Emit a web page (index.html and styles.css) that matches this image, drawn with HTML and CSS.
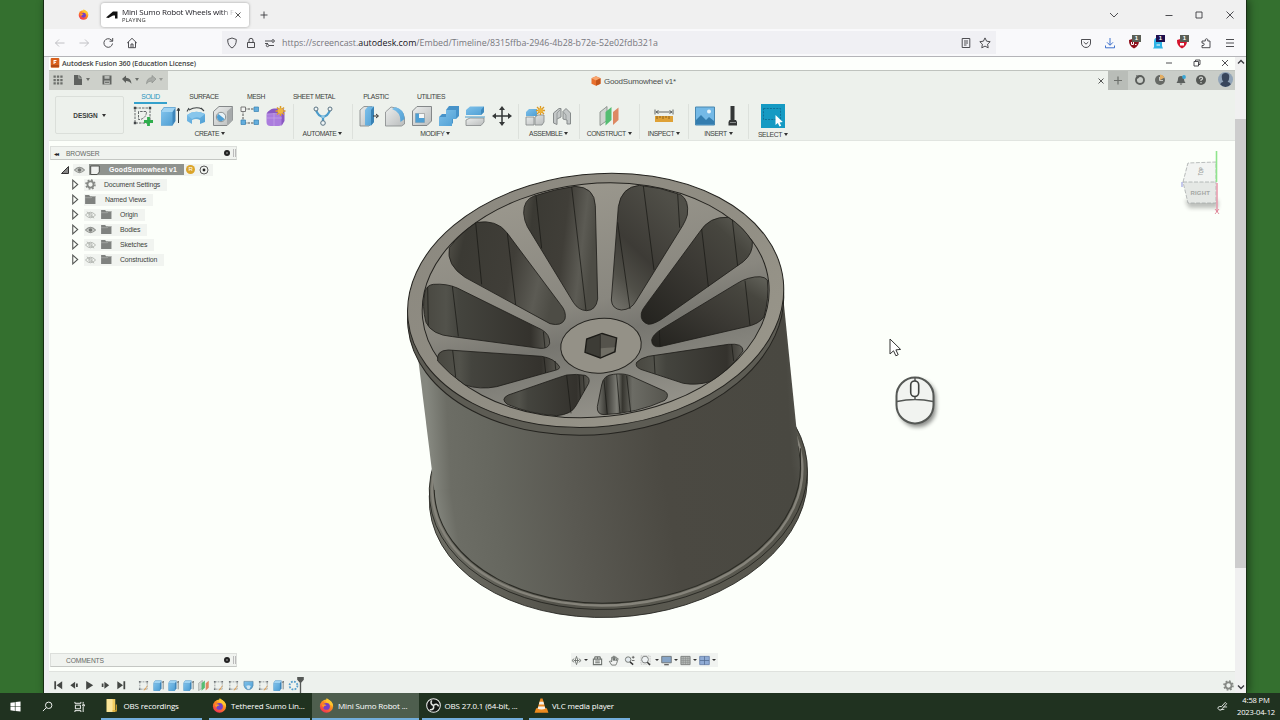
FILE: index.html
```html
<!DOCTYPE html>
<html lang="en">

<head>
  <meta charset="UTF-8" />
  <meta name="viewport" content="width=device-width, initial-scale=1.0" />
  <title>Mini Sumo Robot Wheels</title>
  <link rel="stylesheet" href="styles.css">
</head>

<body>
  <!-- Shared icons -->
  <svg class="sprite">
    <defs>
      <linearGradient id="flame" x1="0.8" y1="0" x2="0.2" y2="1">
        <stop offset="0" stop-color="#ffd93b" />
        <stop offset="0.45" stop-color="#ff8a1f" />
        <stop offset="1" stop-color="#f0245b" />
      </linearGradient>
      <linearGradient id="blueFace" x1="0" y1="0" x2="1" y2="1">
        <stop offset="0" stop-color="#7fc1ea" />
        <stop offset="1" stop-color="#4f9fd4" />
      </linearGradient>
      <linearGradient id="greyFace" x1="0" y1="0" x2="1" y2="1">
        <stop offset="0" stop-color="#eceeed" />
        <stop offset="1" stop-color="#b9bcbc" />
      </linearGradient>
    </defs>
    <symbol id="firefox" viewBox="0 0 16 16">
      <circle cx="8" cy="8.700" r="7" fill="url(#flame)" />
      <path d="M8 .2C11 1.500 14.500 4.500 15 8.500L11 7 7.500 4z" fill="#ffc72e" />
      <path d="M1.500 3l1.800 1.500L5 3.500l.5 3z" fill="#ff7b27" />
      <circle cx="8" cy="9" r="3.600" fill="#7440c8" />
      <path d="M3 7.500q3-2 5 .5-3 0-3 2.500z" fill="#ff9a24" />
    </symbol>
    <symbol id="folder" viewBox="0 0 12 10">
      <path d="M0 0h4.500l1 1.500H11.500V10H0z" fill="#7f827f" />
      <path d="M0 3h7l1-1.300h4" stroke="#b5b8b4" stroke-width=".7" fill="none" />
    </symbol>
    <symbol id="eye" viewBox="0 0 12 8">
      <path d="M.5 4Q6-2 11.500 4 6 10 .5 4z" fill="#c6c9c5" stroke="#8a8d89" stroke-width="1.100" />
      <circle cx="6" cy="4" r="2" fill="#757874" />
    </symbol>
    <symbol id="eye-off" viewBox="0 0 12 8">
      <path d="M.5 4Q6-2 11.500 4 6 10 .5 4zM2 .5l8 7" fill="none" stroke="#a9aca8" stroke-width=".9" />
      <circle cx="6" cy="4" r="1.800" fill="none" stroke="#a9aca8" stroke-width=".9" />
    </symbol>
    <symbol id="gear" viewBox="0 0 12 12">
      <circle cx="6" cy="6" r="3.300" fill="none" stroke="#858884" stroke-width="1.900" />
      <circle cx="6" cy="6" r="4.900" fill="none" stroke="#858884" stroke-width="1.700" stroke-dasharray="1.900 1.950" />
    </symbol>
    <symbol id="sketch" viewBox="0 0 12 12">
      <path d="M2 2h8v8H2z" fill="none" stroke="#7e8488" stroke-width=".8" stroke-dasharray="2 1" />
      <path d="M1 1h1.700v1.700H1zM9.300 1H11v1.700H9.300zM1 9.300h1.700V11H1z" fill="#6d7275" />
      <path d="M11 5l-4 5-1 1.500L8 11z" fill="#e39a45" />
    </symbol>
    <symbol id="extrude" viewBox="0 0 20 20">
      <path d="M1 5l3-4h11.500v14l-3 4.500H1z" fill="#3e86bb" />
      <path d="M1 6h11.500v13.500H1z" fill="url(#blueFace)" />
      <path d="M1 6l3-4.500h11.500l-3 4.500z" fill="#9fd3f2" />
      <path d="M18.500 17V3m-1.500 2l1.500-3L20 5" fill="none" stroke="#34383a" />
    </symbol>
    <symbol id="plane" viewBox="0 0 20 20">
      <path d="M1 6l7-5.500v14L1 19.500z" fill="#d0d4d1" stroke="#7f8582" stroke-width=".8" />
      <path d="M6.500 6l6-5v13l-6 5.500z" fill="#55bd72" />
      <path d="M14 6l5.500-4.500v12.500L14 19z" fill="#dd8862" />
    </symbol>
    <symbol id="tri" viewBox="0 0 8 10">
      <path d="M1.500 1L6 5l-4.500 4z" fill="#fcfffa" stroke="#555855" />
    </symbol>
  </svg>

  <div class="desktop">
    <div class="window">
      <!-- Firefox tab strip -->
      <div class="tab-strip">
        <svg class="pinned"><use href="#firefox" /></svg>
        <div class="tab">
          <svg class="favicon" viewBox="0 0 12 10"><path d="M0 7.500L7 1.500h4.500V8.500H9V5.500H7L2.500 8z" fill="#111" /></svg>
          <div class="tab-label">
            <div class="tab-title">Mini Sumo Robot Wheels with F</div>
            <div class="tab-state">PLAYING</div>
          </div>
          <svg class="x-icon" viewBox="0 0 8 8"><path d="M1.500 1.500l5 5m0-5l-5 5" /></svg>
        </div>
        <svg class="line new-tab" viewBox="0 0 8 8"><path d="M4 .5v7M.5 4h7" /></svg>
        <div class="window-controls">
          <svg class="line" viewBox="0 0 8 8"><path d="M0 2l4 4 4-4" /></svg>
          <svg class="line" viewBox="0 0 8 8"><path d="M.5 4.500h7" /></svg>
          <svg class="line" viewBox="0 0 8 8"><path d="M1 1h6v6H1z" /></svg>
          <svg class="line" viewBox="0 0 8 8"><path d="M.5.5l7 7m0-7l-7 7" /></svg>
        </div>
      </div>

      <!-- Address bar -->
      <div class="nav-bar">
        <div class="nav-buttons">
          <svg class="line faded" viewBox="0 0 12 12"><path d="M10.500 6h-9m3.500-3.500L1.500 6 5 9.500" /></svg>
          <svg class="line faded" viewBox="0 0 12 12"><path d="M1.500 6h9M7 2.500L10.500 6 7 9.500" /></svg>
          <svg class="line" viewBox="0 0 12 12"><path d="M10.500 6.500a4.300 4.300 0 1 1-1.300-3.600L10.500 4M10.700 1v3.200H7.500" /></svg>
          <svg class="line" viewBox="0 0 12 12"><path d="M1.200 6L6 1.300 10.800 6M2.500 5v5.700h7V5M5 10.500V7h2v3.500" /></svg>
        </div>
        <div class="url-field">
          <svg class="line" viewBox="0 0 12 12"><path d="M6 1l4.300 1.500Q10.500 8.500 6 11 1.500 8.500 1.700 2.500z" /></svg>
          <svg class="line" viewBox="0 0 12 12"><path d="M2.500 5.500h7v5h-7zM4 5.500V3.300a2 2 0 0 1 4 0v2.200" /></svg>
          <svg class="line" viewBox="0 0 12 12"><path d="M1 4h6M1 6.500h3M5 8.500h5" /><circle cx="9" cy="4" r="1.300" /><circle cx="3.500" cy="8.500" r="1.200" /></svg>
          <span class="url">https://screencast.<b>autodesk.com</b>/Embed/Timeline/8315ffba-2946-4b28-b72e-52e02fdb321a</span>
          <svg class="line" viewBox="0 0 12 12"><path d="M2.200 1.500h7.600v9H2.200zM4 4h4M4 6h4M4 8h2.500" /></svg>
          <svg class="line" viewBox="0 0 12 12"><path d="M6 .9l1.600 3.300 3.600.5-2.600 2.500.6 3.600L6 9.100l-3.200 1.700.6-3.600L.8 4.700l3.600-.5z" /></svg>
        </div>
        <div class="extensions">
          <svg class="line" viewBox="0 0 12 12"><path d="M1.500 2.500h9V6a4.500 4.500 0 0 1-9 0zM3.700 5L6 7.200 8.300 5" /></svg>
          <svg class="line download" viewBox="0 0 12 12"><path d="M6 1v7M3 5.300L6 8.300l3-3M1.500 8.500v2.300h9V8.500" /></svg>
          <div class="ext">
            <svg viewBox="0 0 12 12"><path d="M6 1.500l5 1.500q.3 6-5 8.500Q.7 9 1 3z" fill="#8e0f1b" /><path d="M3.500 5v2.500h2V5m1.500 2.500h1.500" stroke="#fff" fill="none" /></svg>
            <span class="badge">1</span>
          </div>
          <div class="ext">
            <svg viewBox="0 0 12 12"><path d="M2 10V4.500a4 4 0 0 1 8 0V9l1 2.500H1z" fill="#2eb3e6" /><path d="M4.500 8h3.500" stroke="#fff" /></svg>
            <span class="badge purple">1</span>
          </div>
          <div class="ext">
            <svg viewBox="0 0 12 12"><path d="M6 1.500l5 1.500q.3 6-5 8.500Q.7 9 1 3z" fill="#d4142c" /><path d="M4 6h4v2.500H4z" fill="#fff" /></svg>
            <span class="badge">1</span>
          </div>
          <svg class="line" viewBox="0 0 12 12"><path d="M2 4h3.300V2.700a1.300 1.300 0 0 1 2.500 0V4H10v6.700H2V8.500h1a1.200 1.200 0 0 0 0-2.400H2z" /></svg>
          <svg class="line" viewBox="0 0 12 12"><path d="M2 2.500h8M2 6h8M2 9.500h8" /></svg>
        </div>
      </div>

      <div class="page">
        <div class="fusion">
          <!-- Fusion title bar -->
          <div class="title-bar">
            <svg class="app-icon" viewBox="0 0 10 10"><rect x=".7" y="0" width="8.600" height="9.700" rx="1" fill="#d9601c" /><path d="M4 2.500h2.500M4 4.300h2M4 2v4" stroke="#fff" /><path d="M1 8h8" stroke="#8a3512" /></svg>
            <span>Autodesk Fusion 360 (Education License)</span>
            <div class="app-controls">
              <svg class="line" viewBox="0 0 8 8"><path d="M1 4h6" /></svg>
              <svg class="line" viewBox="0 0 8 8"><path d="M1 2.500h4.500V7H1zM2.500 2.500V1H7v4.500H5.500" /></svg>
              <svg class="line" viewBox="0 0 8 8"><path d="M1 1l6 6m0-6L1 7" /></svg>
            </div>
          </div>

          <div class="quick-bar">
            <div class="quick-tools">
              <svg viewBox="0 0 12 12"><path d="M1.500 1.500h2.300v2.300H1.500zM4.900 1.500h2.300v2.300H4.900zM8.300 1.500h2.300v2.300H8.300zM1.500 4.900h2.300v2.300H1.500zM4.900 4.900h2.300v2.300H4.900zM8.300 4.900h2.300v2.300H8.300zM1.500 8.300h2.300v2.300H1.500zM4.900 8.300h2.300v2.300H4.900zM8.300 8.300h2.300v2.300H8.300z" fill="#6c6f6b" /></svg>
              <svg class="doc" viewBox="0 0 12 12"><path d="M2 1h4.500v3.500H10V11H2zM7.300 1L10 3.700H7.300z" fill="#5f625f" /></svg>
              <i class="caret grey"></i>
              <svg class="save" viewBox="0 0 12 12"><path d="M1.500 1.500h9v9h-9z" fill="#616461" /><path d="M3.500 2h5v2.700h-5zM3.200 6.500h5.600v3.800H3.200z" fill="#b7bab6" /><path d="M4 8.300h4" stroke="#616461" /></svg>
              <svg class="undo" viewBox="0 0 12 12"><path d="M1 5l4-3.500v2.200q5 0 5.500 6-2-3-5.500-2.700v2z" fill="#5c5f5c" /></svg>
              <i class="caret grey"></i>
              <svg class="redo" viewBox="0 0 12 12"><path d="M11 5L7 1.500v2.200q-5 0-5.500 6 2-3 5.500-2.700v2z" fill="#a9aca8" stroke="#8d908c" stroke-width=".7" /></svg>
              <i class="caret light"></i>
            </div>
            <div class="doc-tab">
              <div class="doc-name">
                <svg viewBox="0 0 10 10"><path d="M5 .3l4.500 2v5.400L5 9.800.5 7.700V2.300z" fill="#e8702d" /><path d="M5 .3l4.500 2L5 4.500.5 2.300z" fill="#f7a66f" /><path d="M5 4.500l4.500-2.200v5.400L5 9.800z" fill="#c2541a" /></svg>
                <span>GoodSumowheel v1*</span>
              </div>
              <svg class="x-icon" viewBox="0 0 8 8"><path d="M1.500 1.500l5 5m0-5l-5 5" /></svg>
            </div>
            <div class="status-tools">
              <svg class="plus" viewBox="0 0 20 19"><path d="M10 5.500v8M6 9.500h8" stroke="#6d706c" stroke-width="1.200" /></svg>
              <svg viewBox="0 0 12 12"><circle cx="6" cy="6" r="4" fill="none" stroke="#5a5d5a" stroke-width="1.900" /><path d="M2 1l4 1.500L3.500 5z" fill="#5a5d5a" /></svg>
              <svg viewBox="0 0 12 12"><circle cx="6" cy="6" r="5" fill="#666965" /><path d="M6 6V.5a5.500 5.500 0 0 1 4.500 3z" fill="#e4ae61" /><path d="M5.500 3v3.500H9" stroke="#c7cac6" fill="none" /></svg>
              <svg viewBox="0 0 12 12"><path d="M1.500 9q1.500-1.500 1.500-4a3 3 0 0 1 6 0q0 2.500 1.500 4zM4.500 9.500h3L6 11z" fill="#5b5f5d" /><circle cx="9" cy="3" r="1.900" fill="#38a5d5" /></svg>
              <svg viewBox="0 0 12 12"><circle cx="6" cy="6" r="5" fill="#555855" /><path d="M4.400 4.700q.1-1.500 1.600-1.500t1.600 1.300Q7.600 5.500 6 6v1M6 8v1.300" stroke="#d3d6d2" fill="none" stroke-width="1.200" /></svg>
              <svg class="avatar" viewBox="0 0 14 14"><circle cx="7" cy="7" r="7" fill="#91a4b8" /><path d="M3.500 4.500Q3.500 1 7 1t3.500 3.500Q10.500 8 9 9q2.500.5 3 2.500Q10 14 7 14t-5-2.500Q2.500 9.500 5 9 3.500 8 3.500 4.500z" fill="#38465c" /></svg>
            </div>
          </div>

          <!-- Ribbon -->
          <div class="ribbon">
            <div class="workspace">DESIGN <i class="caret"></i></div>
            <div class="ribbon-main">
              <div class="ribbon-tabs">
                <span class="active">SOLID</span>
                <span class="t-surface">SURFACE</span>
                <span class="t-mesh">MESH</span>
                <span class="t-sheet">SHEET METAL</span>
                <span class="t-plastic">PLASTIC</span>
                <span class="t-utilities">UTILITIES</span>
              </div>
              <div class="groups">
                <div class="group g-create">
                  <div class="icons">
                    <svg viewBox="0 0 20 20"><path d="M2 2h15v15H2zM5.500 5.500v8h2q6-2 6-8z" fill="none" stroke="#55595b" stroke-width=".9" stroke-dasharray="2.500 1" /><path d="M.8.8h2.400v2.400H.8zM15.800.8h2.400v2.400h-2.400zM.8 15.800h2.400v2.400H.8z" fill="#44484a" /><path d="M15.500 11v9M11 15.500h9" stroke="#2fae4d" stroke-width="2.800" /></svg>
                    <svg><use href="#extrude" /></svg>
                    <svg viewBox="0 0 20 20"><path d="M1 9Q9 3 19 8v8l-5 2v-4q-4-2-8 0v4l-5-3z" fill="url(#blueFace)" /><path d="M1 9Q9 3 19 8l-5 4q-4-2-8 1z" fill="#87c6ec" /><path d="M3 4q7-4 13-1M1 5.500L3 2m15 3l-3-3" fill="none" stroke="#3f4446" stroke-width="1.100" /></svg>
                    <svg viewBox="0 0 20 20"><path d="M.5 5.500L6 .5h13.500V14L14 19.500H.5z" fill="url(#greyFace)" stroke="#848889" /><path d="M14 5.500L19.500.5V14L14 19.500z" fill="#a6aaab" /><circle cx="8" cy="11" r="4.700" fill="#e8f2f6" stroke="#8c9293" /><path d="M5.500 8a4 4 0 1 0 6 5z" fill="#4e9ed2" /></svg>
                    <svg viewBox="0 0 20 20"><path d="M4 3h12M3 4v12M4 17h12" stroke="#555" stroke-dasharray="2.500 1" /><path d="M1 1h4.500v4.500H1z" fill="#f2f4f2" stroke="#777" /><path d="M14 1h4.500v4.500H14zM1 14h4.500v4.500H1zM14 14h4.500v4.500H14z" fill="#63aedd" stroke="#3881b2" stroke-width=".7" /></svg>
                    <svg viewBox="0 0 20 20"><rect x=".5" y="5" width="16" height="15" rx="4" fill="#ab7ddd" /><path d="M.8 8Q3 3 8 2.500h8q2 0 2.500 3V15l-3 5V8z" fill="#8a59c2" /><path d="M1 12h15M8 7v13M1 8q8-1 15 0" stroke="#c6a6e8" stroke-width=".7" fill="none" /><path d="M14.500 0v10M9.500 5h10M11 1.500l7 7m0-7l-7 7" stroke="#dc9d29" stroke-width="1.500" /><circle cx="14.500" cy="5" r="2.800" fill="#efb740" /></svg>
                  </div>
                  <div class="label">CREATE <i class="caret"></i></div>
                </div>
                <div class="group g-automate">
                  <div class="icons">
                    <svg viewBox="0 0 20 20"><path d="M3 4q2 6 7 7m7-7q-2 6-7 7v6" stroke="#4c9dcc" stroke-width="2.300" fill="none" /><circle cx="3" cy="3" r="2" fill="#eef4f5" stroke="#5a7382" /><circle cx="17" cy="3" r="2" fill="#eef4f5" stroke="#5a7382" /><circle cx="10" cy="17" r="2.300" fill="#eef4f5" stroke="#5a7382" /><circle cx="10" cy="10.500" r="1.600" fill="#92c9e6" /></svg>
                  </div>
                  <div class="label">AUTOMATE <i class="caret"></i></div>
                </div>
                <div class="group g-modify">
                  <div class="icons">
                    <svg viewBox="0 0 20 20"><path d="M1 4l4-3.500h8V17l-3 3H1z" fill="url(#greyFace)" stroke="#7c8080" stroke-width=".8" /><path d="M6 4l3-3.500h6V16l-3 3.500H6z" fill="url(#blueFace)" /><path d="M12 4l3-3.500V16l-3 3.500z" fill="#3881b4" /><path d="M14 10h5m-2-2l2.500 2L17 12" stroke="#333" fill="none" /></svg>
                    <svg viewBox="0 0 20 20"><path d="M.5 6L6 1q12 1 13.500 11v6l-3 2H.5z" fill="url(#greyFace)" stroke="#848889" stroke-width=".8" /><path d="M7 3l3-2q9 2 9.500 11v1l-4 3Q16 6 7 3z" fill="url(#blueFace)" /></svg>
                    <svg viewBox="0 0 20 20"><path d="M.5 5L5 .5h14.500V15L15 19.500H.5z" fill="url(#greyFace)" stroke="#848889" /><path d="M3.500 7.500h9v9h-9z" fill="#f4f7f7" stroke="#929797" stroke-width=".7" /><path d="M3.500 7.500H7V12h5.500v4.500h-9z" fill="#4e9fd3" /></svg>
                    <svg viewBox="0 0 20 20"><path d="M7 4l3-4h10v10l-3 3h-3v4l-3 3H0V11l3-3h4z" fill="#4793c9" /><path d="M7 4h10v9h-4v7H0v-9h7z" fill="url(#blueFace)" /></svg>
                    <svg viewBox="0 0 20 20"><path d="M1 4l4-3.500h14V6l-3 3H1z" fill="url(#blueFace)" /><path d="M16 4l3-3.500V6l-3 3z" fill="#3e89bd" /><path d="M1 14l4-2h14v4l-3 3.500H1z" fill="url(#greyFace)" stroke="#848889" stroke-width=".8" /><path d="M0 11h20" stroke="#64a9d0" stroke-width="1.200" /></svg>
                    <svg viewBox="0 0 20 20"><path d="M10 2v16M2 10h16" stroke="#353838" stroke-width="1.500" /><path d="M10 0l3 4H7zM10 20l3-4H7zM0 10l4-3v6zM20 10l-4-3v6z" fill="#353838" /></svg>
                  </div>
                  <div class="label">MODIFY <i class="caret"></i></div>
                </div>
                <div class="group g-assemble">
                  <div class="icons">
                    <svg viewBox="0 0 20 20"><path d="M1 6l3-3h8v7H1z" fill="url(#blueFace)" /><path d="M1 11h8v8H1zM10 11l3-2h6v7l-2 3h-7z" fill="url(#greyFace)" stroke="#808585" stroke-width=".8" /><path d="M15.500 0v9M11 4.500h9M12 1l7 7m0-7l-7 7" stroke="#db9a25" stroke-width="1.300" /><circle cx="15.500" cy="4.500" r="2.500" fill="#edb33b" /></svg>
                    <svg viewBox="0 0 20 20"><path d="M1.500 17V7L7 2.500h2V11l-4 2v5.500zM18.500 18V7L14 2.500l-3 3v7.500l4 1v4z" fill="#c3c7c7" stroke="#868b8b" /><path d="M5 13V7l4-4M11 5.500L14 9v5" fill="none" stroke="#989d9d" /></svg>
                  </div>
                  <div class="label">ASSEMBLE <i class="caret"></i></div>
                </div>
                <div class="group g-construct">
                  <div class="icons"><svg><use href="#plane" /></svg></div>
                  <div class="label">CONSTRUCT <i class="caret"></i></div>
                </div>
                <div class="group g-inspect">
                  <div class="icons">
                    <svg viewBox="0 0 20 20"><path d="M1 10h18v6H1z" fill="#dfa136" /><path d="M3 10v3m3-3v2m3-2v3m3-3v2m3-2v3" stroke="#7a5418" stroke-width=".8" /><path d="M1 3.500v5m18-5v5M2 6h16M4.500 4.500L2 6 4.500 7.500m11-3L18 6 15.500 7.500" stroke="#55595a" fill="none" stroke-width=".9" /></svg>
                  </div>
                  <div class="label">INSPECT <i class="caret"></i></div>
                </div>
                <div class="group g-insert">
                  <div class="icons">
                    <svg viewBox="0 0 20 20"><path d="M.5 1h19v18H.5z" fill="#74b9e6" stroke="#4988b0" /><path d="M1 14l5-5 5 5 3-3 5 4v3.500H1z" fill="#347daf" /><circle cx="14" cy="5.500" r="2" fill="#e9f4fa" /></svg>
                    <svg viewBox="0 0 20 20"><path d="M8.500 0h4v14h1.500l1 2v3.500H6.500V16l1-2h1z" fill="#343737" /><path d="M8 16.500h6" stroke="#8b8f8f" /></svg>
                  </div>
                  <div class="label">INSERT <i class="caret"></i></div>
                </div>
                <div class="group g-select">
                  <div class="icons">
                    <svg class="select-icon" viewBox="0 0 24 24"><path d="M0 0h24v24H0z" fill="#159ac3" /><path d="M2.500 4.500h17v11h-17z" fill="none" stroke="#0d668c" stroke-width=".8" stroke-dasharray="2 1.200" /><path d="M14.500 11v10l2.300-2 1.700 3.500 1.700-.8-1.600-3.300 3.200-.4z" fill="#fff" /></svg>
                  </div>
                  <div class="label">SELECT <i class="caret"></i></div>
                </div>
              </div>
            </div>
          </div>

          <!-- 3D viewport -->
          <div class="viewport">
            <svg class="wheel" viewBox="0 0 1260 1380">
              <defs>
                <linearGradient id="barrel" gradientUnits="userSpaceOnUse" x1="45" y1="0" x2="1205" y2="-60">
                  <stop offset="0" stop-color="#85877f" />
                  <stop offset=".05" stop-color="#6c6d65" />
                  <stop offset=".16" stop-color="#66675f" />
                  <stop offset=".35" stop-color="#5a5952" />
                  <stop offset=".6" stop-color="#4b4942" />
                  <stop offset=".93" stop-color="#494841" />
                  <stop offset=".98" stop-color="#5a5a53" />
                  <stop offset="1" stop-color="#85867f" />
                </linearGradient>
                <linearGradient id="flange" x1="0" y1="0" x2="1" y2="0">
                  <stop offset="0" stop-color="#6f6f66" />
                  <stop offset=".3" stop-color="#54534b" />
                  <stop offset=".65" stop-color="#5b5a51" />
                  <stop offset="1" stop-color="#55544b" />
                </linearGradient>
                <linearGradient id="rim" x1="0" y1="0" x2="1" y2="1">
                  <stop offset="0" stop-color="#8b887f" />
                  <stop offset=".5" stop-color="#908d83" />
                  <stop offset="1" stop-color="#9b988c" />
                </linearGradient>
                <linearGradient id="spokes" gradientUnits="userSpaceOnUse" x1="560" y1="60" x2="650" y2="750">
                  <stop offset="0" stop-color="#9a978d" />
                  <stop offset=".5" stop-color="#89877f" />
                  <stop offset=".65" stop-color="#777670" />
                  <stop offset=".8" stop-color="#83827b" />
                  <stop offset="1" stop-color="#94928a" />
                </linearGradient>
                <linearGradient id="pocketA" x1="0" y1="0" x2="1" y2=".2">
                  <stop offset="0" stop-color="#55534b" />
                  <stop offset=".16" stop-color="#3b3a34" />
                  <stop offset=".6" stop-color="#403e38" />
                  <stop offset=".85" stop-color="#5c5b54" />
                  <stop offset="1" stop-color="#4d4c45" />
                </linearGradient>
                <linearGradient id="pocketB" x1="0" y1="1" x2=".6" y2="0">
                  <stop offset="0" stop-color="#77766f" />
                  <stop offset=".25" stop-color="#504f48" />
                  <stop offset=".5" stop-color="#3d3b36" />
                  <stop offset="1" stop-color="#504f48" />
                </linearGradient>
                <linearGradient id="pocketC" x1="0" y1="1" x2="1" y2="0">
                  <stop offset="0" stop-color="#23221e" />
                  <stop offset=".5" stop-color="#3b3934" />
                  <stop offset=".8" stop-color="#47463f" />
                  <stop offset="1" stop-color="#64645c" />
                </linearGradient>
                <linearGradient id="pocketD" x1="0" y1="0" x2="1" y2="0">
                  <stop offset="0" stop-color="#484740" />
                  <stop offset=".18" stop-color="#52524b" />
                  <stop offset=".28" stop-color="#44443e" />
                  <stop offset=".85" stop-color="#34322d" />
                  <stop offset="1" stop-color="#5c5b54" />
                </linearGradient>
                <linearGradient id="pocketE" x1="0" y1="0" x2="1" y2="0">
                  <stop offset="0" stop-color="#777770" />
                  <stop offset=".13" stop-color="#3a3934" />
                  <stop offset=".28" stop-color="#7d7d76" />
                  <stop offset=".36" stop-color="#373630" />
                  <stop offset=".5" stop-color="#6c6c65" />
                  <stop offset="1" stop-color="#56554e" />
                </linearGradient>
              </defs>

              <!-- lower flange -->
              <g stroke="#24241f" stroke-width="2.500">
                <ellipse cx="655" cy="972" rx="569" ry="383" transform="rotate(-6 655 972)" fill="url(#flange)" />
                <ellipse cx="655" cy="960" rx="569" ry="383" transform="rotate(-6 655 960)" fill="url(#flange)" stroke="none" />
                <ellipse cx="655" cy="948" rx="569" ry="383" transform="rotate(-6 655 948)" fill="url(#flange)" />
              </g>
              <ellipse cx="652" cy="943" rx="557" ry="376" transform="rotate(-6 652 943)" fill="none" stroke="#85837a" stroke-width="7" />
              <!-- barrel -->
              <ellipse cx="652" cy="938" rx="551" ry="374" transform="rotate(-6 652 938)" fill="url(#barrel)" stroke="#292923" stroke-width="3" />
              <path d="M52 560L103 975L1201 905L1148 380z" fill="url(#barrel)" />
              <path d="M1201 905V850" stroke="#292923" stroke-width="3" />
              <!-- rim -->
              <g stroke="#24231f" stroke-width="3">
                <ellipse cx="587" cy="429" rx="566" ry="379" transform="rotate(-6 587 429)" fill="#5d5c54" />
                <ellipse cx="587" cy="406" rx="566" ry="379" transform="rotate(-6 587 406)" fill="url(#rim)" />
                <ellipse cx="587" cy="406" rx="522" ry="350" transform="rotate(-6 587 406)" fill="url(#spokes)" />
              </g>
              <!-- pockets between the spokes -->
              <g stroke="#1f1e1a" stroke-width="2.500">
                <path fill="url(#pocketA)" d="M371 145Q370 105 402 93Q465 72 525 64Q584 66 586 122L593 402Q588 436 560 437Q535 436 520 412L382 185Q373 168 371 145z" />
                <path fill="url(#pocketB)" d="M655 125Q664 66 718 61Q780 66 842 89Q868 105 862 150Q858 165 848 182L708 408Q694 434 664 435Q636 432 634 405z" />
                <path fill="url(#pocketC)" d="M985 157Q1030 185 1057 230Q1060 265 1030 290L800 452Q765 478 745 478Q720 470 724 445Q726 434 736 422L898 202Q928 153 985 157z" />
                <path fill="url(#pocketC)" d="M1045 340Q1088 328 1102 345Q1108 400 1092 455Q1078 478 1035 486L780 545Q755 548 755 525Q757 510 785 492L1010 356Q1027 345 1045 340z" />
                <path fill="url(#pocketD)" d="M745 574L985 538Q1030 534 1029 558Q990 615 930 650Q890 662 850 655L722 613Q704 605 710 592Q720 580 745 574z" />
                <path fill="url(#pocketE)" d="M605 660Q610 630 640 628Q670 624 690 632L795 679Q810 690 795 706Q710 745 612 749Q590 748 592 725z" />
                <path fill="url(#pocketD)" d="M500 630Q530 626 555 631Q572 638 566 655L528 722Q515 748 470 752Q390 747 322 718Q300 702 325 690L475 638z" />
                <path fill="url(#pocketD)" d="M145 555L425 574Q462 580 478 604Q482 612 465 616L290 665Q240 675 195 660Q145 625 113 588Q108 556 145 555z" />
                <path fill="url(#pocketD)" d="M100 358Q140 355 172 369L425 494Q450 508 449 535Q445 552 420 550L158 515Q95 510 78 472Q65 425 75 378Q82 360 100 358z" />
                <path fill="url(#pocketA)" d="M230 172Q290 163 320 202L482 419Q500 440 495 462Q485 485 450 476L195 337Q138 300 148 248Q180 205 230 172z" />
              </g>
              <!-- inner wall edges -->
              <path class="edges" d="M408 92L425 250M515 66L558 436M730 63L762 315M833 87L839 188M653 172L690 432M905 192L925 365M997 164L1013 303M1035 347L1050 482M778 497L780 544M995 537L1001 588M762 572L765 626M612 645L622 748M650 628L660 745M680 632L692 741M500 631L513 745M537 630L541 700M550 632L553 678M158 556L167 636M432 577L437 624M465 588L467 614M83 366L85 482M157 363L175 514M430 500L435 549M227 173L245 358M322 204L347 420" />
              <!-- hub -->
              <ellipse cx="603" cy="542" rx="121" ry="82" transform="rotate(-5 603 542)" fill="#949187" stroke="#24231f" stroke-width="3" />
              <path d="M606 505L650 519 645 560 601 579 555 562 560 522z" fill="#3d3c36" stroke="#1c1b17" stroke-width="4" />
              <path d="M601 507L647 520 643 550 601 550z" fill="#55534c" />
              <path d="M601 550L644 547 642 559 601 577z" fill="#706e65" />
              <path d="M601 507V577" stroke="#24231f" stroke-width="2" />
            </svg>

            <div class="panel browser-panel">
              <div class="panel-head">
                <span class="collapse">◂◂</span>
                <span>BROWSER</span>
                <i class="dot"></i><i class="grip"></i>
              </div>
              <ul class="tree">
                <li class="root">
                  <svg class="open" viewBox="0 0 8 8"><path d="M7.500.5v7h-7z" fill="#888" stroke="#333" /></svg>
                  <div class="node">
                    <svg class="eye"><use href="#eye" /></svg>
                    <div class="selected">
                      <svg viewBox="0 0 10 10"><path d="M.7 1h8.600v6l-2 2.500H.7z" fill="#eff1ee" stroke="#4e514d" /></svg>
                      <b>GoodSumowheel v1</b>
                    </div>
                    <span class="warn">R</span>
                    <svg class="target" viewBox="0 0 10 10"><circle cx="5" cy="5" r="4" fill="none" stroke="#333" stroke-width=".8" /><circle cx="5" cy="5" r="1.400" fill="#222" /></svg>
                  </div>
                </li>
                <li><svg class="tri"><use href="#tri" /></svg><div class="node"><svg class="gear"><use href="#gear" /></svg><span>Document Settings</span></div></li>
                <li><svg class="tri"><use href="#tri" /></svg><div class="node"><svg class="folder"><use href="#folder" /></svg><span>Named Views</span></div></li>
                <li><svg class="tri"><use href="#tri" /></svg><div class="node"><svg class="eye"><use href="#eye-off" /></svg><svg class="folder"><use href="#folder" /></svg><span>Origin</span></div></li>
                <li><svg class="tri"><use href="#tri" /></svg><div class="node"><svg class="eye"><use href="#eye" /></svg><svg class="folder"><use href="#folder" /></svg><span>Bodies</span></div></li>
                <li><svg class="tri"><use href="#tri" /></svg><div class="node"><svg class="eye"><use href="#eye-off" /></svg><svg class="folder"><use href="#folder" /></svg><span>Sketches</span></div></li>
                <li><svg class="tri"><use href="#tri" /></svg><div class="node"><svg class="eye"><use href="#eye-off" /></svg><svg class="folder"><use href="#folder" /></svg><span>Construction</span></div></li>
              </ul>
            </div>

            <svg class="view-cube" viewBox="0 0 48 70">
              <path d="M9 50h33v8H13z" fill="#000" opacity=".25" class="soft" />
              <path d="M11 13l29-1v20H7z" fill="#f2f4f2" />
              <path d="M7 32h33v21H12z" fill="#e5e8e5" />
              <path d="M7 32l5-19 28-1v41H12zM7 32h33" fill="none" stroke="#9fa3a3" stroke-width=".7" stroke-dasharray="4 1.500" />
              <path d="M40.500 1v31" stroke="#8fe58d" stroke-width="1.600" />
              <path d="M41 33v29" stroke="#e79cae" stroke-width="1.600" />
              <path d="M39 59l4 5m0-5l-4 5" stroke="#d86c83" stroke-width=".7" />
              <path d="M6 32v5" stroke="#8e92dd" />
              <text x="24.300" y="44.500" text-anchor="middle">RIGHT</text>
              <text transform="translate(26.500 26) rotate(-80) scale(.65 1.100)">TOP</text>
            </svg>

            <svg class="pointer" viewBox="0 0 12 19"><path d="M1 1v15l3.500-3.200 2.400 5 2.300-1.100-2.300-4.800 4.700-.5z" fill="#fff" stroke="#333" /></svg>
            <svg class="mouse" viewBox="0 0 50 60">
              <rect x="9" y="8" width="37" height="47" rx="18" class="soft" fill="#000" opacity=".45" />
              <rect x="6.500" y="5.500" width="37" height="46" rx="18.500" fill="#f1f3f0" stroke="#555855" stroke-width="2" />
              <path d="M7 29.500q18-4 36 0M25 6v3M25 24v3.500" fill="none" stroke="#555855" stroke-width="1.500" />
              <rect x="20.700" y="9" width="8" height="15.500" rx="4" fill="#f5f7f4" stroke="#3f423f" stroke-width="1.600" />
            </svg>

            <div class="viewport-foot">
              <div class="panel">
                <div class="panel-head comments"><span>COMMENTS</span><i class="dot"></i><i class="grip"></i></div>
              </div>
              <div class="view-tools">
                <svg viewBox="0 0 12 12"><path d="M3.500 4L1 6l2.500 2M8.500 4L11 6 8.500 8M6 1.500q3 4.500 0 9-3-4.500 0-9zM3 6h6" fill="none" stroke="#6e736f" /></svg><i class="caret"></i>
                <svg class="home" viewBox="0 0 12 12"><path d="M1.500 4.500h9v6h-9zM3 2v2.500M6 2v2.500M9 2v2.500M3.500 6.500h5M3.500 8.500h5M3 2h6" fill="none" stroke="#6e736f" stroke-width="1.200" /></svg>
                <svg class="hand" viewBox="0 0 12 12"><path d="M4 11L1.500 7 3 6.500l1 1V2.500l1.200-.3L5.800 6V1.300H7V6l1-4 1 .2L8.700 6.500l1.500-3 .9.5L9.500 9 8.500 11z" fill="#f1f3f1" stroke="#555a57" stroke-width=".8" /></svg>
                <svg class="zoom" viewBox="0 0 12 12"><circle cx="4.500" cy="5" r="3" fill="#e4ebef" stroke="#6e736f" /><path d="M6.500 7.500l3.500 3" stroke="#333" stroke-width="1.500" /><path d="M10 1v3M8.500 2.500h3M8.500 6h3" stroke="#444" stroke-width=".8" /></svg>
                <svg class="loupe" viewBox="0 0 12 12"><path d="M1 1h10v9H1z" stroke="#aaa" stroke-dasharray="1.500 1" fill="none" stroke-width=".7" /><circle cx="5.500" cy="5" r="3.700" fill="#eef2f3" stroke="#777b79" /><path d="M8 8l3 3" stroke="#333" stroke-width="1.500" /></svg><i class="caret"></i>
                <svg viewBox="0 0 12 12"><path d="M.8 1.500h10.400v7H.8z" fill="#86a4c6" stroke="#6f7476" /><path d="M3.500 10.500h5" stroke="#666" stroke-width="1.500" /></svg><i class="caret"></i>
                <svg viewBox="0 0 12 12"><path d="M1 1.500h10v9H1z" fill="#b5b9b7" stroke="#7b7f7d" /><path d="M1 4h10M1 6h10M1 8h10M3.500 1.500v9M6 1.500v9M8.500 1.500v9" stroke="#878b89" stroke-width=".6" /></svg><i class="caret"></i>
                <svg viewBox="0 0 12 12"><path d="M.8 1.500h10.400v9H.8z" fill="#8fabd4" stroke="#6c86ad" /><path d="M6 1.500v9M1 6h10" stroke="#50698e" stroke-width=".8" /></svg><i class="caret"></i>
              </div>
            </div>
          </div>

          <!-- Timeline -->
          <div class="timeline">
            <div class="playback">
              <svg viewBox="0 0 12 12"><path d="M1.500 1.500h2v9h-2zM10.500 1.500v9L4 6z" /></svg>
              <svg viewBox="0 0 12 12"><path d="M7 2v8L1.500 6zM8 4h2v4H8z" /></svg>
              <svg viewBox="0 0 12 12"><path d="M2.500 1v10L10.500 6z" /></svg>
              <svg viewBox="0 0 12 12"><path d="M5 2v8l5.500-4zM2 4h2v4H2z" /></svg>
              <svg viewBox="0 0 12 12"><path d="M8.500 1.500h2v9h-2zM1.500 1.500v9L8 6z" /></svg>
            </div>
            <div class="features">
              <svg><use href="#sketch" /></svg>
              <svg><use href="#extrude" /></svg>
              <svg><use href="#extrude" /></svg>
              <svg><use href="#extrude" /></svg>
              <svg><use href="#plane" /></svg>
              <svg><use href="#sketch" /></svg>
              <svg><use href="#sketch" /></svg>
              <svg viewBox="0 0 12 12"><path d="M1 1.500h10V6q-1 4-4 4.500H5Q2 10 1 6z" fill="url(#blueFace)" stroke="#4a7798" stroke-width=".6" /><path d="M3.500 6.500q2.500-1.500 5 0L7 10H5z" fill="#cfe6f3" /></svg>
              <svg><use href="#sketch" /></svg>
              <svg><use href="#extrude" /></svg>
              <svg viewBox="0 0 12 12"><circle cx="6" cy="6" r="4.300" fill="none" stroke="#5aa0cc" stroke-width="2" stroke-dasharray="2 1.380" /></svg>
            </div>
            <svg class="marker" viewBox="0 0 8 18"><path d="M.5 0h7v3L4.700 6V18H3.300V6L.5 3z" fill="#555856" /></svg>
            <svg class="timeline-gear"><use href="#gear" /></svg>
          </div>
        </div>

        <div class="scrollbar">
          <svg class="line" viewBox="0 0 8 8"><path d="M1 5.500l3-3 3 3" /></svg>
          <div class="thumb"></div>
          <svg class="line" viewBox="0 0 8 8"><path d="M1 2.500l3 3 3-3" /></svg>
        </div>
      </div>
    </div>

    <!-- Windows taskbar -->
    <div class="taskbar">
      <div class="system">
        <svg viewBox="0 0 12 12"><path d="M.5 2l4.800-.7v4.400H.5zM6 1.200L11.500.5v5.200H6zM.5 6.300h4.800v4.500L.5 10zM6 6.300h5.500v5.200L6 10.800z" fill="#fff" /></svg>
        <svg viewBox="0 0 12 12"><circle cx="7.300" cy="4.700" r="3.500" fill="none" stroke="#fff" /><path d="M4.800 7.200L1 11" stroke="#fff" /></svg>
        <svg viewBox="0 0 12 12"><path d="M1 1v1.500h6.500V1M1.500 4.500H7v4H1.500zM1 12v-1.500h6.500V12M10 1v2M10 6.500V12M9.500 4h1.800v1.500H9.500z" fill="none" stroke="#fff" /></svg>
      </div>
      <div class="task t-folder">
        <svg viewBox="0 0 14 14"><path d="M2.500 1h8v12h-8z" fill="#f3cf62" /><path d="M2.500 1H8v12H2.500z" fill="#fbe59a" /><path d="M8 12h3.500V6" stroke="#dba92f" fill="none" /></svg>
        <span>OBS recordings</span>
      </div>
      <div class="task t-tethered">
        <svg><use href="#firefox" /></svg>
        <span>Tethered Sumo Lin...</span>
      </div>
      <div class="task t-mini">
        <svg><use href="#firefox" /></svg>
        <span>Mini Sumo Robot ...</span>
      </div>
      <div class="task t-obs">
        <svg viewBox="0 0 16 16"><circle cx="8" cy="8" r="7.300" fill="#151715" stroke="#e8eae8" stroke-width="1.100" /><path d="M6 2.500q-2 4 2 5.500M13.500 9q-2-4-5.500-1M4 12.500q5 .5 4-4.500" fill="none" stroke="#dfe2df" stroke-width="1.700" /></svg>
        <span>OBS 27.0.1 (64-bit, ...</span>
      </div>
      <div class="task t-vlc">
        <svg viewBox="0 0 14 14"><path d="M2 9.500h10l1.500 4.300H.5z" fill="#ef8a1d" /><path d="M6 .5h2l3 10.500q-4 2-8 0z" fill="#f08b20" /><path d="M5.200 3.500h3.600l.7 2.500h-5zM4 8h6l.6 2q-3.600 1.500-7.200 0z" fill="#f4f1ed" /></svg>
        <span>VLC media player</span>
      </div>
      <svg class="tray" viewBox="0 0 12 12"><path d="M1 8q0-2 2-2h2l4-4.500L10.500 3 6 8q-1 2-2.500 2T1 8zM4 9.500L8 9M7 6.500h4" fill="none" stroke="#e9ece9" /></svg>
      <div class="clock">
        <div>4:58 PM</div>
        <div>2023-04-12</div>
      </div>
    </div>
  </div>
</body>

</html>
```
FILE: styles.css
```css
* { margin: 0; padding: 0; box-sizing: border-box; }
body {
  width: 1280px;
  height: 720px;
  overflow: hidden;
  font-family: "Liberation Sans", Arial, sans-serif;
  color: #3c3f3c;
}
svg { display: block; flex: none; overflow: visible; }
.sprite { position: absolute; width: 0; height: 0; }
.line {
  fill: none;
  stroke: #3b3b40;
  stroke-width: 0.9;
}
.caret {
  display: inline-block;
  flex: none;
  border: 2px solid transparent;
  border-top: 3px solid #333;
  border-bottom: 0;
}
.caret.grey { border-top-color: #6b6e6a; }
.caret.light { border-top-color: #989b97; }

.desktop {
  height: 720px;
  display: flex;
  flex-direction: column;
  background-color: #34702f;
}
.window {
  width: 1204px;
  height: 693px;
  margin-left: 43px;
  display: flex;
  flex-direction: column;
  border-left: 1px solid #172d14;
  border-right: 1px solid #172d14;
  background-color: #f0f0f0;
  box-shadow: 2px 0 8px rgba(0, 0, 0, 0.45);
}

/* Firefox */
.tab-strip {
  height: 29px;
  display: flex;
  align-items: center;
  padding-left: 34px;
  background-color: #f0f0f0;
  font-family: "Open Sans", "Noto Sans", sans-serif;
}
.pinned { width: 11px; height: 11px; }
.tab {
  width: 148px;
  height: 24px;
  margin-left: 12px;
  margin-top: 1px;
  padding: 0 6px 0 5px;
  display: flex;
  align-items: center;
  background-color: #fff;
  border-radius: 3px;
  box-shadow: 0 0 3px rgba(0, 0, 0, 0.35);
}
.favicon { width: 12px; height: 10px; }
.tab-label {
  width: 113px;
  margin-left: 4px;
  margin-right: -1px;
  overflow: hidden;
  white-space: nowrap;
  line-height: 9px;
  -webkit-mask-image: linear-gradient(90deg, #000 88%, transparent 100%);
  mask-image: linear-gradient(90deg, #000 88%, transparent 100%);
}
.tab-title { font-size: 8px; letter-spacing: -0.19px; color: #1c1b22; }
.tab-state { font-size: 5.8px; line-height: 8px; color: #333; }
.x-icon { width: 8px; height: 8px; stroke: #444; stroke-width: 0.9; fill: none; }
.new-tab { width: 8px; height: 8px; margin-left: 11px; }
.window-controls {
  display: flex;
  gap: 22.6px;
  margin-left: auto;
  padding-right: 12px;
}
.window-controls svg { width: 8px; height: 8px; }
.window-controls svg:first-child { margin-right: 24px; }
.nav-bar {
  height: 27px;
  display: flex;
  align-items: center;
  background-color: #f9f9fb;
}
.nav-bar svg { width: 12px; height: 12px; }
.nav-buttons {
  width: 178px;
  display: flex;
  gap: 12px;
  padding-left: 10px;
}
.nav-buttons .faded { stroke: #b9b9bd; }
.url-field {
  width: 774px;
  height: 23px;
  display: flex;
  align-items: center;
  gap: 7px;
  padding: 0 5px 0 4px;
  background-color: #f0f0f4;
}
.url {
  flex: 1;
  padding-top: 1px;
  font-family: "Open Sans", "Noto Sans", sans-serif;
  font-size: 8.83px;
  white-space: nowrap;
  color: #77777d;
  margin-left: -1px;
}
.url b { font-weight: 400; color: #15141a; }
.extensions {
  display: flex;
  gap: 12px;
  margin-left: auto;
  padding-right: 10px;
}
.download { stroke: #2a62c6; }
.ext { position: relative; }
.badge {
  position: absolute;
  left: 4px;
  top: -2px;
  width: 9px;
  height: 7px;
  background-color: #5a5e55;
  color: #fff;
  font-size: 6px;
  font-weight: bold;
  line-height: 7px;
  text-align: center;
}
.badge.purple { background-color: #1f0f4d; }

/* Fusion window */
.page {
  flex: 1;
  display: flex;
  padding-left: 5px;
  border-top: 1px solid #b4b4b8;
  background-color: #eeeef2;
}
.fusion {
  width: 1186px;
  display: flex;
  flex-direction: column;
  background-color: #edf1ec;
}
.title-bar {
  height: 13px;
  display: flex;
  align-items: center;
  background-color: #fdfffc;
  font-family: "Open Sans", "Noto Sans", sans-serif;
  font-size: 7.1px;
  font-weight: 600;
  color: #444;
  letter-spacing: -0.12px;
}
.title-bar span { margin-top: -1px; }
.app-icon { width: 10px; height: 10px; margin: -1px 2px 0 1px; }
.app-controls {
  display: flex;
  gap: 20px;
  margin: -2px 0 0 auto;
  padding-right: 6px;
}
.app-controls svg { width: 8px; height: 8px; }
.quick-bar {
  height: 20px;
  display: flex;
  border-top: 1px solid #bfc3be;
}
.quick-tools {
  width: 119px;
  display: flex;
  align-items: center;
  padding-left: 3px;
  padding-bottom: 2px;
  background-color: #cdd0ca;
}
.quick-tools svg { width: 12px; height: 12px; }
.quick-tools .doc { margin-left: 8px; }
.quick-tools .doc + .caret { margin-left: 2px; }
.quick-tools .save { margin-left: 11px; }
.quick-tools .undo { margin-left: 8px; }
.quick-tools .undo + .caret { margin-left: 2px; }
.quick-tools .redo { margin-left: 6px; }
.quick-tools .redo + .caret { margin-left: 2px; }
.doc-tab {
  flex: 1;
  display: flex;
  align-items: center;
}
.doc-name {
  flex: 1;
  display: flex;
  align-items: center;
  justify-content: center;
  gap: 3px;
  padding: 1px 0 0 2px;
  font-size: 8px;
  letter-spacing: -0.18px;
  color: #4c4f4c;
}
.doc-name svg { width: 10px; height: 10px; }
.doc-tab .x-icon { margin-right: 3px; }
.status-tools {
  width: 127px;
  display: flex;
  align-items: center;
  gap: 8.5px;
  padding-bottom: 2px;
  background-color: #c9cdc8;
}
.status-tools svg { width: 12px; height: 12px; }
.status-tools .plus { width: 20px; height: 19px; margin: 1px -3px 0 0; background-color: #b9bdb8; }
.status-tools .avatar { width: 15px; height: 15px; margin-left: 2px; }

.ribbon {
  height: 51px;
  display: flex;
  border-bottom: 1px solid #e1e5e0;
  font-size: 6.8px;
  letter-spacing: -0.4px;
}
.workspace {
  width: 69px;
  height: 38px;
  margin: 6px 0 0 6px;
  display: flex;
  align-items: center;
  justify-content: center;
  gap: 4px;
  border: 1px solid #dbdfda;
  border-radius: 2px;
  font-weight: bold;
  letter-spacing: -0.1px;
  font-size: 6.5px;
}
.ribbon-tabs {
  height: 14px;
  display: flex;
  padding-left: 10px;
  line-height: 14px;
  text-align: center;
}
.ribbon-tabs .active {
  width: 33px;
  color: #2c93bd;
  border-bottom: 2px solid #35a1cc;
}
.t-surface { width: 74px; }
.t-mesh { width: 30px; }
.t-sheet { width: 86px; }
.t-plastic { width: 38px; }
.t-utilities { width: 72px; }
.groups { display: flex; padding-left: 3px; }
.group {
  height: 35px;
  display: flex;
  flex-direction: column;
  align-items: center;
  border-right: 1px solid #dde1dc;
}
.group:last-child { border-right: 0; }
.icons {
  height: 25px;
  display: flex;
  align-items: center;
  gap: 6.7px;
}
.icons svg { width: 20px; height: 20px; }
.icons .select-icon { width: 24px; height: 24px; }
.label {
  display: flex;
  align-items: center;
  gap: 2px;
  padding-top: 1px;
  line-height: 11px;
}
.g-create, .g-modify { width: 166.5px; }
.g-automate { width: 59px; }
.g-assemble, .g-construct { width: 60.5px; }
.g-inspect { width: 49px; }
.g-insert { width: 60px; }
.g-select { width: 48px; }

/* Viewport */
.viewport {
  position: relative;
  flex: 1;
  display: flex;
  flex-direction: column;
  justify-content: space-between;
  padding: 5px 0 4px 1px;
  background-color: #fcfffa;
}
.wheel {
  position: absolute;
  left: 351px;
  top: 24px;
  width: 420px;
  height: 460px;
}
.edges { fill: none; stroke: #191815; stroke-width: 2.2; }
.panel { width: 187px; }
.panel-head {
  height: 14px;
  display: flex;
  align-items: center;
  padding-left: 3px;
  border: 1px solid #dcdfdb;
  border-bottom-color: #c4c7c3;
  background-color: #f0f3ef;
  font-size: 6.7px;
  letter-spacing: -0.15px;
  color: #676a66;
}
.collapse { width: 12px; font-size: 6px; letter-spacing: -1px; color: #222; }
.comments { padding-left: 15px; }
.dot {
  width: 6px;
  height: 6px;
  margin-left: auto;
  border-radius: 50%;
  background: radial-gradient(#999 10%, #222 25%);
}
.grip {
  width: 3px;
  height: 8px;
  margin: 0 0 0 3px;
  border-right: 1px solid #bbb;
  border-left: 1px solid #bbb;
}
.tree {
  list-style: none;
  padding-top: 2px;
  font-size: 6.9px;
  letter-spacing: -0.12px;
}
.tree li {
  height: 15px;
  display: flex;
  align-items: center;
  padding-left: 21px;
}
.tree .root { padding-left: 11px; }
.node {
  height: 12px;
  display: flex;
  align-items: center;
  padding: 0 7px 0 1px;
  background-color: #f1f4f0;
}
.open { width: 8px; height: 8px; margin-right: 4px; }
.tri { width: 9px; height: 11px; margin-right: 4px; }
.eye { width: 11px; height: 8px; margin-right: 5px; }
.gear { width: 11px; height: 11px; margin-right: 7px; }
.folder { width: 11px; height: 9px; margin-right: 8px; }
.node .gear + span, .node .folder:first-child + span { margin-left: 1px; }
.selected {
  width: 95px;
  height: 11px;
  display: flex;
  align-items: center;
  gap: 9px;
  padding-left: 1px;
  background-color: #8f938e;
  color: #fff;
  letter-spacing: 0.13px;
}
.root .eye { margin-right: 4px; }
.selected svg { width: 10px; height: 10px; }
.warn {
  width: 9px;
  height: 9px;
  margin: 0 4px 0 2px;
  border-radius: 50%;
  background-color: #dba52b;
  color: #fff;
  font-size: 6px;
  line-height: 9px;
  text-align: center;
}
.root .node { padding-right: 4px; }
.target { width: 10px; height: 10px; }
.view-cube {
  position: absolute;
  left: 1127px;
  top: 9px;
  width: 48px;
  height: 70px;
  font-size: 6px;
  font-weight: bold;
  letter-spacing: 0.2px;
  fill: #a3a6a3;
}
.soft { filter: blur(2px); }
.pointer {
  position: absolute;
  left: 840px;
  top: 197px;
  width: 12px;
  height: 19px;
}
.mouse {
  position: absolute;
  left: 841px;
  top: 231px;
  width: 50px;
  height: 60px;
}
.viewport-foot { display: flex; }
.view-tools {
  width: 147px;
  height: 14px;
  margin-left: 334px;
  display: flex;
  align-items: center;
  background-color: #f0f3f0;
}
.view-tools svg { width: 11px; height: 11px; }
.view-tools .caret { margin: 0 2px; border-width: 2px 2px 0; }
.view-tools .home { margin: 0 5px 0 2px; }
.view-tools .hand, .view-tools .zoom { margin-right: 5px; }
.view-tools .loupe { margin-right: 2px; }

.timeline {
  height: 22px;
  display: flex;
  align-items: center;
  padding: 6px 1px 0 4px;
  border-top: 1px solid #dfe2de;
  background-color: #edf1ed;
}
.playback { display: flex; gap: 5.2px; }
.playback svg { width: 10.5px; height: 10.5px; fill: #444744; }
.features {
  display: flex;
  gap: 4px;
  margin-left: 11.5px;
}
.features svg { width: 11px; height: 11px; }
.marker { width: 9px; height: 17px; margin: -1px 0 0 -3px; }
.timeline-gear { width: 11px; height: 11px; margin-left: auto; }

.scrollbar {
  flex: 1;
  display: flex;
  flex-direction: column;
  align-items: center;
  background-color: #f0f0f0;
}
.scrollbar svg { width: 8px; height: 8px; margin-top: 1px; stroke-width: 1.4; }
.scrollbar svg:last-child { margin: auto 0 2px; }
.thumb {
  width: 11px;
  height: 449px;
  margin-top: 53px;
  background-color: #cdcdcd;
}

/* Taskbar */
.taskbar {
  position: relative;
  height: 27px;
  display: flex;
  align-items: center;
  background-color: #203220;
  color: #fff;
  font-family: "Open Sans", "Noto Sans", sans-serif;
  font-size: 8px;
  letter-spacing: -0.16px;
}
.system {
  width: 101px;
  display: flex;
  gap: 21px;
  padding-left: 10px;
}
.system svg { width: 11px; height: 11px; }
.task {
  width: 101px;
  height: 27px;
  display: flex;
  align-items: center;
  border-bottom: 2px solid #72addb;
  padding-left: 3px;
  white-space: nowrap;
}
.task svg { width: 15px; height: 15px; margin-right: 4.5px; }
.t-tethered { margin-left: 6.5px; }
.t-mini {
  width: 107px;
  margin-left: 2.5px;
  padding-left: 7px;
  background-color: #4e5e4e;
}
.task.t-mini svg { margin-right: 4px; }
.t-obs { margin-left: 3px; padding-left: 4px; }
.task.t-obs svg { margin-right: 3.5px; }
.t-vlc { margin-left: 6px; padding-left: 5px; }
.task.t-vlc svg { margin-right: 3px; }
.tray { width: 11px; height: 11px; margin-left: auto; margin-right: 4px; }
.clock {
  width: 48px;
  padding-bottom: 1px;
  text-align: center;
  font-size: 7.6px;
  line-height: 12px;
}
```
